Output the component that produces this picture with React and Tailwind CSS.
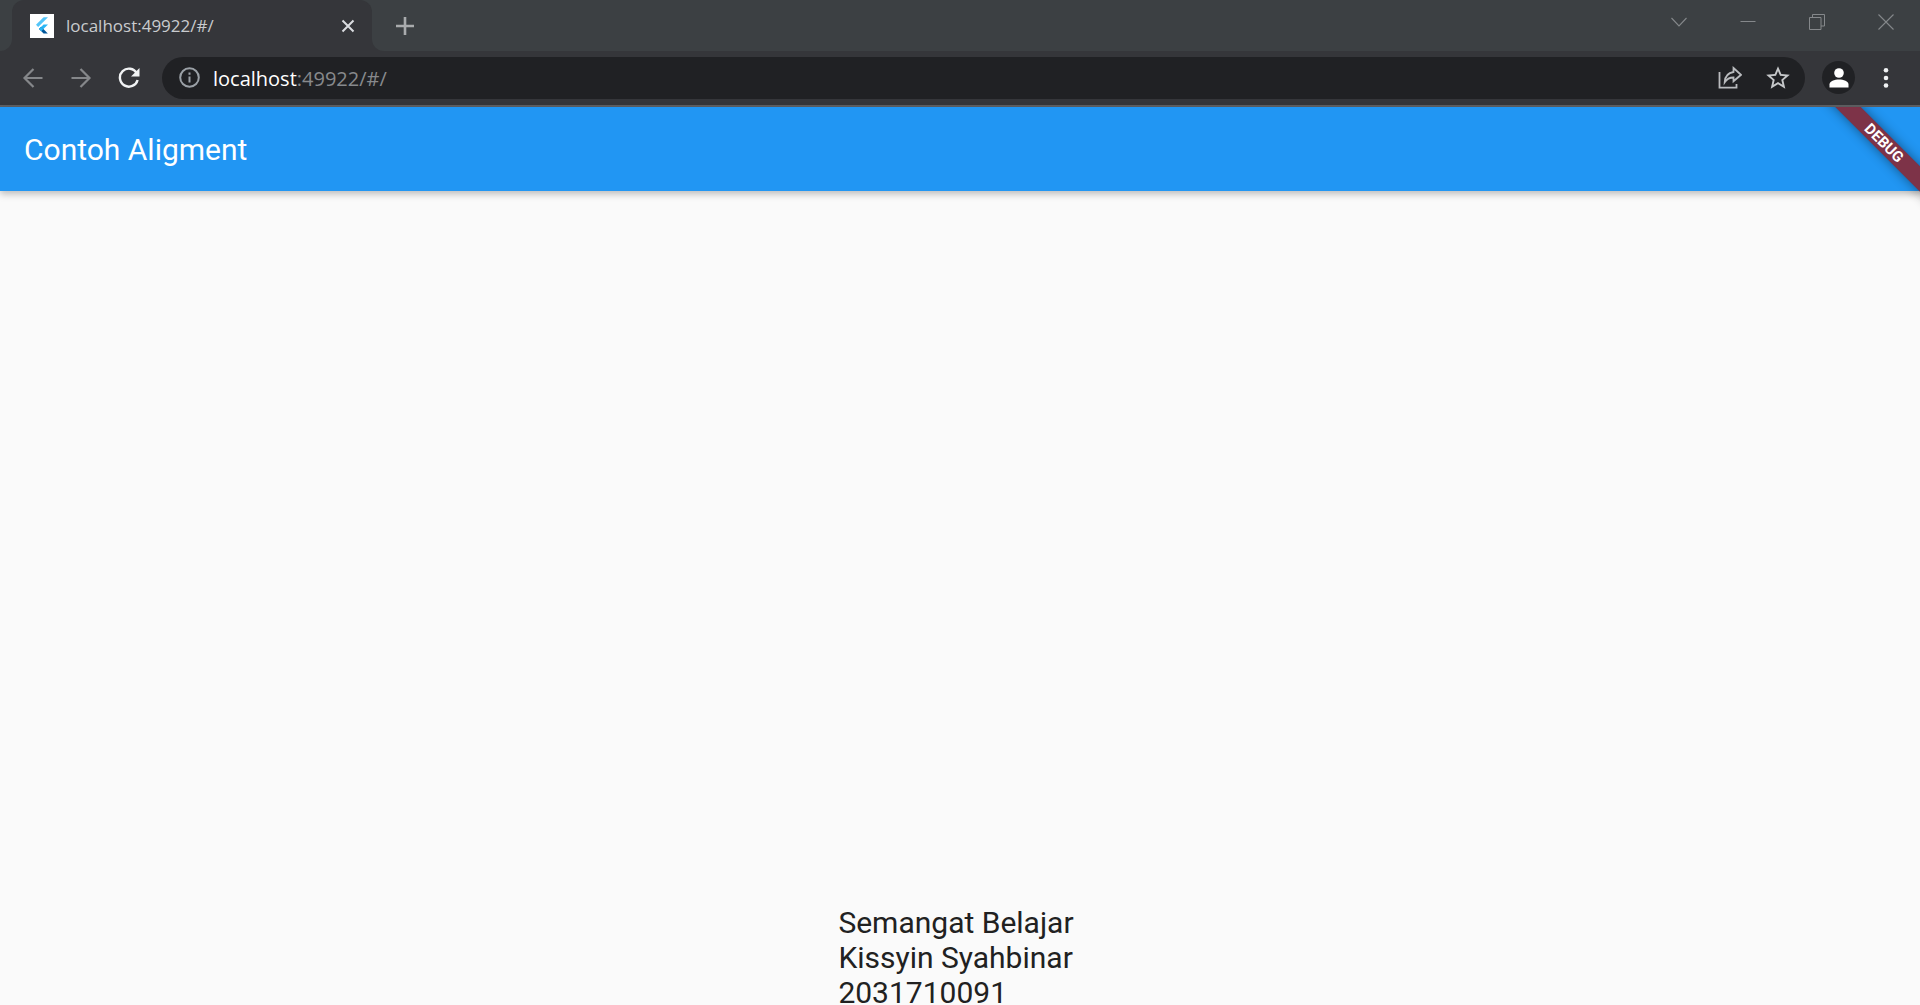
function FlutterLogo() {
  return (
    <svg viewBox="0 0 24 24" className="size-6 shrink-0 bg-white" aria-hidden="true">
      <path d="M13.6 3.2H18L8.2 13 6 10.8z" fill="#54c5f8" />
      <path d="M13.6 10.4H18L12.6 15.8 9.4 15.2 9 15z" fill="#29b6f6" />
      <path d="M9 15l2.2-2.2 6.6 6.8h-4.2z" fill="#01579b" />
      <path d="M9 15l2.2-2.2 2.3 2.3-2.2 2.2z" fill="#29b6f6" />
    </svg>
  );
}

function TabStrip() {
  return (
    <div className="flex h-[51px] bg-[#3c4043]">
      <div className="w-3 shrink-0 bg-[#35363a]">
        <div className="h-full rounded-br-xl bg-[#3c4043]" />
      </div>
      <div className="bg-[#3c4043]">
        <div className="flex h-full w-[360px] items-center rounded-t-xl bg-[#35363a] pl-[18px] pr-[17px]">
          <FlutterLogo />
          <span className="ml-3 flex-1 text-[17px] leading-6 text-[#c9cbce]">localhost:49922/#/</span>
          <button aria-label="Close tab" className="text-[#dadce0]">
            <svg viewBox="0 0 14 14" className="size-[14px]" fill="none" stroke="currentColor" strokeWidth="2">
              <path d="M1.5 1.5l11 11M12.5 1.5l-11 11" />
            </svg>
          </button>
        </div>
      </div>
      <div className="w-3 shrink-0 bg-[#35363a]">
        <div className="h-full rounded-bl-xl bg-[#3c4043]" />
      </div>
      <button aria-label="New tab" className="ml-3 text-[#a9abad]">
        <svg viewBox="0 0 18 18" className="size-[18px]" fill="none" stroke="currentColor" strokeWidth="2.6">
          <path d="M9 0v18M0 9h18" />
        </svg>
      </button>
      <div className="ml-auto flex h-11 items-center text-[#85888b]">
        <button aria-label="Search tabs" className="flex w-[69px] justify-center">
          <svg viewBox="0 0 16 16" className="size-4" fill="none" stroke="currentColor" strokeWidth="1.1">
            <path d="M.5 4L8 12l7.500-8" />
          </svg>
        </button>
        <button aria-label="Minimize" className="flex w-[69px] justify-center">
          <svg viewBox="0 0 16 16" className="size-4" fill="none" stroke="currentColor">
            <path d="M.5 7.500h15" />
          </svg>
        </button>
        <button aria-label="Restore" className="flex w-[69px] justify-center">
          <svg viewBox="0 0 16 16" className="size-4" fill="none" stroke="currentColor">
            <path d="M.5 3.500h11.500v12H.5zM3.500 3.500V.5h12v11.500H12" />
          </svg>
        </button>
        <button aria-label="Close window" className="flex w-[69px] justify-center">
          <svg viewBox="0 0 16 16" className="size-4" fill="none" stroke="currentColor" strokeWidth="1.100">
            <path d="M.5.5l15 15M15.500.5l-15 15" />
          </svg>
        </button>
      </div>
    </div>
  );
}

function Toolbar() {
  return (
    <div className="flex h-14 items-center border-b-2 border-[#5f6063] bg-[#35363a] pb-px pl-[22px] pr-6">
      <button aria-label="Back" className="text-[#85878a]">
        <svg viewBox="0 0 22 22" className="size-[22px]" fill="none" stroke="currentColor" strokeWidth="2.2">
          <path d="M20.500 11H2.500M11.500 2L2.500 11l9 9" />
        </svg>
      </button>
      <button aria-label="Forward" className="ml-[26px] text-[#85878a]">
        <svg viewBox="0 0 22 22" className="size-[22px]" fill="none" stroke="currentColor" strokeWidth="2.2">
          <path d="M1.500 11h18M10.500 2l9 9-9 9" />
        </svg>
      </button>
      <button aria-label="Reload" className="ml-[26px] text-[#f1f3f4]">
        <svg viewBox="0 0 22 22" className="size-[22px]" fill="none" stroke="currentColor" strokeWidth="2.400">
          <path d="M18.800 6.300A9 9 0 1 0 19.600 13" />
          <path d="M21.500 1v8.500H13z" fill="currentColor" stroke="none" />
        </svg>
      </button>
      <div className="ml-[22px] flex h-[42px] flex-1 items-center rounded-full bg-[#202124] pl-[17px] pr-3.5">
        <button aria-label="View site information" className="text-[#9aa0a6]">
          <svg viewBox="0 0 21 21" className="size-[21px]" fill="none" stroke="currentColor" strokeWidth="2">
            <circle cx="10.500" cy="10.500" r="9.300" />
            <path d="M10.500 9.500v6M10.500 5.500v2.200" />
          </svg>
        </button>
        <a href="#/" className="ml-[13px] flex-1 pt-0.5 text-xl leading-7 text-[#87898c]">
          <span className="text-white">localhost</span>:49922/#/
        </a>
        <button aria-label="Share this page" className="text-[#b9bbbe]">
          <svg viewBox="0 0 24 24" className="size-6" fill="none" stroke="currentColor" strokeWidth="1.800">
            <path d="M1.500 6v15.600h17V18" />
            <path d="M15.500 2l7.500 6.800-7.500 6.400v-3.700c-4 0-6.600 1.300-8.800 4.700.3-5.400 3.300-9.400 8.800-10.200z" />
          </svg>
        </button>
        <button aria-label="Bookmark this tab" className="ml-[23px] text-[#c6c8ca]">
          <svg viewBox="1 1 22 22" className="size-[26px]" fill="currentColor">
            <path d="M22 9.240l-7.190-.62L12 2 9.190 8.630 2 9.240l5.460 4.730L5.820 21 12 17.270 18.180 21l-1.630-7.030L22 9.240zM12 15.400l-3.760 2.270 1-4.280-3.320-2.880 4.380-.38L12 6.100l1.710 4.040 4.380.38-3.320 2.880 1 4.280L12 15.400z" />
          </svg>
        </button>
      </div>
      <button aria-label="Profile" className="ml-[17px] flex size-[33px] items-center justify-center rounded-full bg-[#202124] text-white">
        <svg viewBox="0 0 20 20" className="size-5" fill="currentColor">
          <circle cx="10" cy="5" r="4.800" />
          <path d="M.5 19.500v-3c0-3.400 5-5 9.500-5s9.500 1.600 9.500 5v3z" />
        </svg>
      </button>
      <button aria-label="Menu" className="ml-[21px] text-[#f1f3f4]">
        <svg viewBox="0 0 20 20" className="size-5" fill="currentColor">
          <circle cx="10" cy="2.300" r="2.300" />
          <circle cx="10" cy="10" r="2.300" />
          <circle cx="10" cy="17.500" r="2.300" />
        </svg>
      </button>
    </div>
  );
}

function DebugBanner() {
  return (
    <div className="pointer-events-none absolute right-0 top-0 size-28 overflow-hidden">
      <div className="absolute -right-11 top-[27px] flex h-[18px] w-40 rotate-45 items-center justify-center bg-[#7d3348] text-[15px] font-bold leading-[18px] text-white shadow-[0_0_12px_rgba(0,0,0,0.45)]">
        DEBUG
      </div>
    </div>
  );
}

export default function App() {
  return (
    <div className="flex h-screen flex-col overflow-hidden bg-[#fafafa]">
      <div className="shrink-0 font-['Open_Sans','Noto_Sans',sans-serif]">
        <TabStrip />
        <Toolbar />
      </div>
      <div className="relative flex flex-1 flex-col font-['Roboto',sans-serif]">
        <header className="flex h-[84px] items-center bg-[#2196f3] px-6 pt-0.5 shadow-[0_3px_7px_rgba(0,0,0,0.25)]">
          <h1 className="text-[30px] leading-9 text-white">Contoh Aligment</h1>
        </header>
        <DebugBanner />
        <main className="flex flex-1 items-end justify-center">
          <div className="-mb-[5px] pr-2 text-[30px] leading-[35px] text-[#212121]">
            <p>Semangat Belajar</p>
            <p>Kissyin Syahbinar</p>
            <p>2031710091</p>
          </div>
        </main>
      </div>
    </div>
  );
}
